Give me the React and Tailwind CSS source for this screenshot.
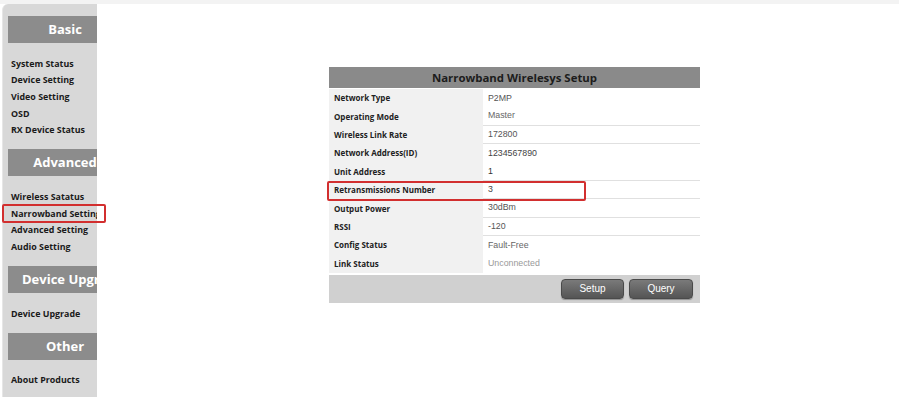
import React from "react";

const sections = [
  { title: "Basic", items: ["System Status", "Device Setting", "Video Setting", "OSD", "RX Device Status"] },
  { title: "Advanced", items: ["Wireless Satatus", "Narrowband Setting", "Advanced Setting", "Audio Setting"] },
  { title: "Device Upgrade", items: ["Device Upgrade"] },
  { title: "Other", items: ["About Products"] },
];

const rows = [
  ["Network Type", "P2MP", false, "text-[#555]"],
  ["Operating Mode", "Master", true, "text-[#666]"],
  ["Wireless Link Rate", "172800", true, "text-[#555]"],
  ["Network Address(ID)", "1234567890", false, "text-[#444]"],
  ["Unit Address", "1", true, "text-[#333]"],
  ["Retransmissions Number", "3", true, "text-[#444]"],
  ["Output Power", "30dBm", true, "text-[#555]"],
  ["RSSI", "-120", true, "text-[#555]"],
  ["Config Status", "Fault-Free", false, "text-[#666]"],
  ["Link Status", "Unconnected", false, "text-[#999]"],
];

export default function App() {
  return (
    <div className="relative w-[899px] h-[397px] bg-white overflow-hidden" style={{ fontFamily: "'Open Sans', 'Liberation Sans', sans-serif" }}>
      <div className="h-[4px] bg-[#f3f3f3]" />
      <div className="flex">
        <div className="ml-[2px] w-[95px] h-[393px] bg-[#d8d8d8] rounded-tl-[6px] overflow-hidden border-l border-[#e6e6e6]">
          {sections.map((s, i) => (
            <div key={s.title}>
              <div className={`ml-[5px] ${i === 0 ? "mt-[12px]" : "mt-[10.5px]"} w-[100px] h-[27px] bg-[#8c8c8c] pl-[14px] flex items-center`}>
                <div className="w-full text-center whitespace-nowrap text-white font-bold text-[13px] leading-none">{s.title}</div>
              </div>
              <div className="pt-[12.5px] pl-[8px]">
                {s.items.map((it) => (
                  <div key={it} className="h-[16.7px] leading-[16.7px] text-[8.9px] font-bold text-[#1a1a1a] whitespace-nowrap">{it}</div>
                ))}
              </div>
            </div>
          ))}
        </div>
        <div className="flex-1 pl-[232px] pt-[63px]">
          <div className="w-[371px]">
            <div className="h-[21px] bg-[#8a8a8a] flex items-center justify-center text-[11.4px] font-bold text-[#1c1c1c]">
              Narrowband Wirelesys Setup
            </div>
            <div className="mt-[1px]">
              {rows.map(([label, value, line, color]) => (
                <div key={label} className="flex h-[18.4px]">
                  <div className="w-[154px] bg-[#f1f1f1] pl-[5px] flex items-center text-[8px] font-bold text-[#222] whitespace-nowrap">{label}</div>
                  <div className={`flex-1 bg-white pl-[5px] flex items-center text-[8.8px] ${color} ${line ? "border-b border-[#e0e0e0]" : ""}`} style={{ fontFamily: "'Liberation Sans', sans-serif" }}>
                    {value}
                  </div>
                </div>
              ))}
            </div>
            <div className="mt-[2px] h-[28px] bg-[#d0d0d0] flex items-center justify-end gap-[5px] pr-[7px]">
              <button className="w-[63px] h-[20px] rounded-[4px] bg-gradient-to-b from-[#7a7a7a] to-[#555] border border-[#4a4a4a] text-white text-[10px] shadow-[0_1px_1px_rgba(0,0,0,0.3)]" style={{ fontFamily: "'Liberation Sans', sans-serif" }}>Setup</button>
              <button className="w-[64px] h-[20px] rounded-[4px] bg-gradient-to-b from-[#7a7a7a] to-[#555] border border-[#4a4a4a] text-white text-[10px] shadow-[0_1px_1px_rgba(0,0,0,0.3)]" style={{ fontFamily: "'Liberation Sans', sans-serif" }}>Query</button>
            </div>
          </div>
        </div>
      </div>
      <div className="absolute left-[2px] top-[204px] w-[104px] h-[19px] border-2 border-[#d22f2f] rounded-[2px]" />
      <div className="absolute left-[327px] top-[181px] w-[259px] h-[20px] border-2 border-[#d22f2f] rounded-[2px]" />
    </div>
  );
}
